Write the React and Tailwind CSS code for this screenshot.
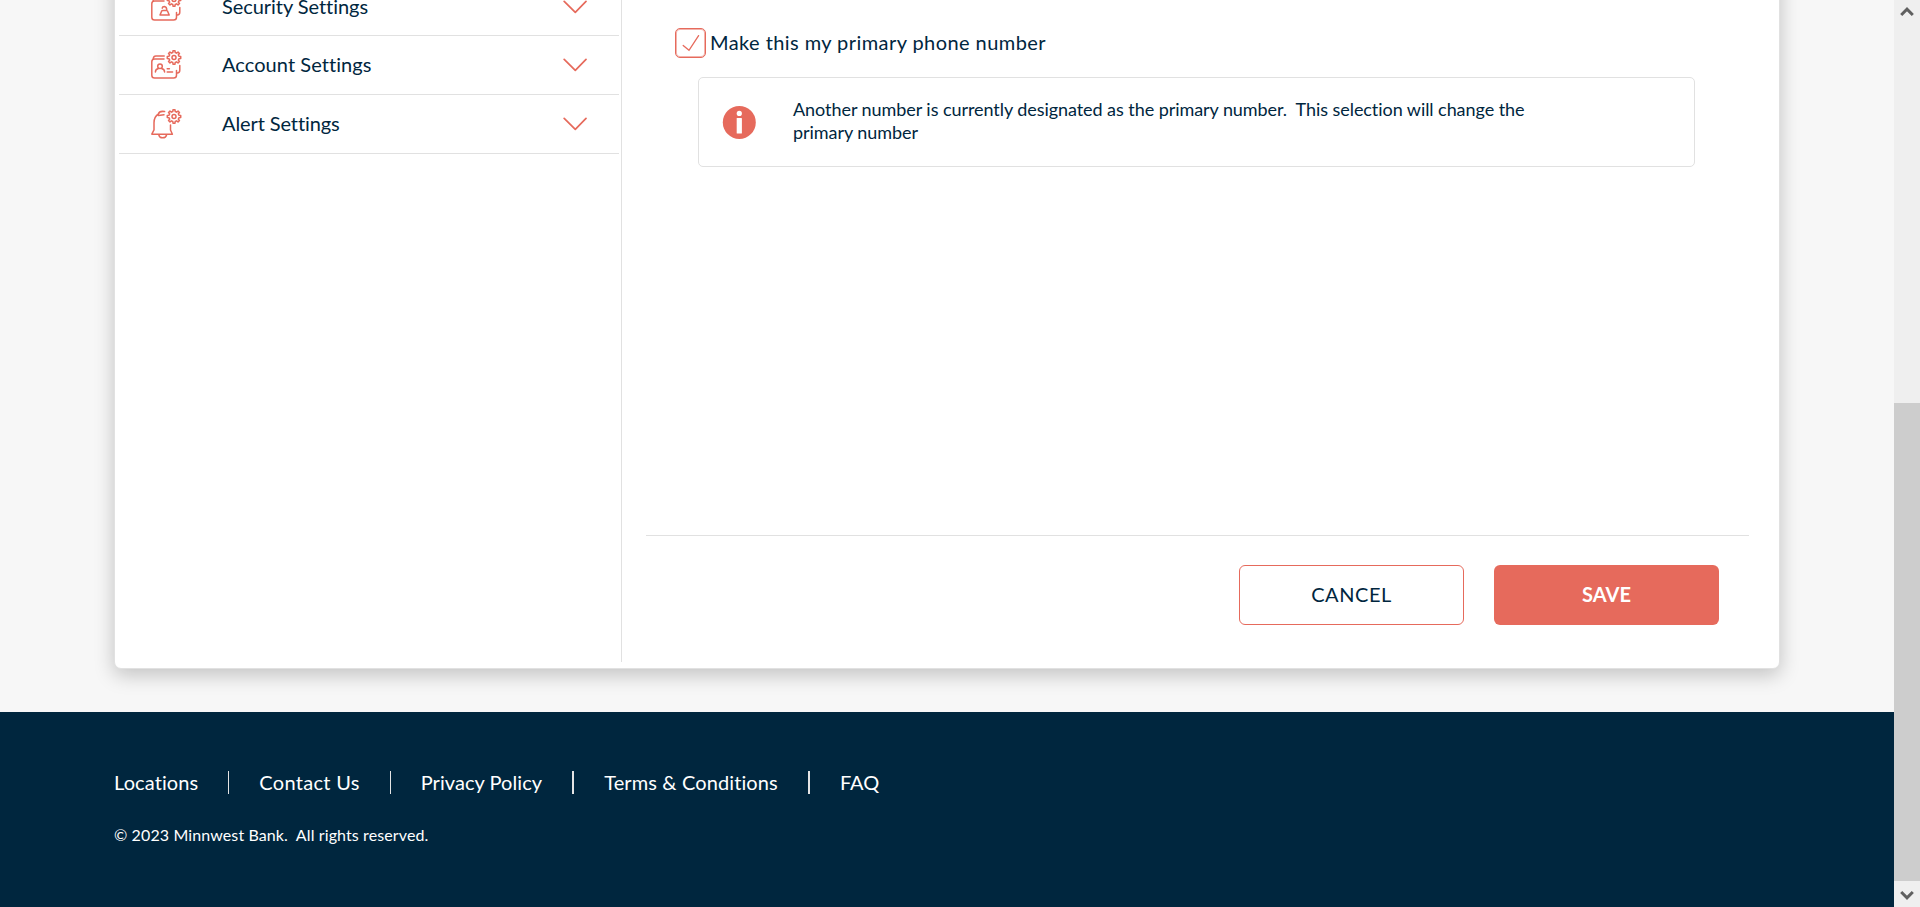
import React from "react";

function gearPath(cx, cy, ro, ri, teeth) {
  const pts = [];
  const step = (Math.PI * 2) / teeth;
  for (let i = 0; i < teeth; i++) {
    const a = i * step - Math.PI / 2;
    [[-0.3, ri], [-0.19, ro], [0.19, ro], [0.3, ri]].forEach(([f, r]) => {
      pts.push(`${(cx + r * Math.cos(a + f * step)).toFixed(2)} ${(cy + r * Math.sin(a + f * step)).toFixed(2)}`);
    });
  }
  return `M${pts.join("L")}Z`;
}

function Gear() {
  return (
    <>
      <path d={gearPath(24, 8.5, 6.8, 5.1, 8)} />
      <circle cx="24" cy="8.5" r="2" />
    </>
  );
}

function FolderFrame() {
  return (
    <>
      <path d="M14 10H4.6Q1.8 10 1.8 12.8V26.2Q1.8 29 4.6 29H23.6Q26.5 29 26.5 26.2V21.5" />
      <path d="M3.2 9.6Q3.6 6.9 5.8 6.9H14.2" />
      <path d="M29.8 16.5V21.3Q29.8 24 27.2 24" />
    </>
  );
}

function Icon({ children }) {
  return (
    <svg viewBox="0 0 32 32" className="h-8 w-8 shrink-0" fill="none" stroke="#e66a5c" strokeWidth="1.5" strokeLinecap="round" strokeLinejoin="round">
      {children}
      <Gear />
    </svg>
  );
}

const icons = {
  security: (
    <Icon>
      <FolderFrame />
      <path d="M10 24L11.6 20.2Q12 19.6 12.8 19.6H16.4Q17.2 19.6 17.6 20.2L19.2 24ZM12.2 17.2Q12.4 15.4 14.4 15.4Q16.8 15.6 16.8 19.4" />
    </Icon>
  ),
  account: (
    <Icon>
      <FolderFrame />
      <circle cx="10" cy="17.2" r="2.3" />
      <path d="M5.4 23Q5.4 19.8 8.6 19.4M11.4 19.4Q14.6 19.8 14.6 23M17.2 19.8H19.4M17.2 23H22.6" />
    </Icon>
  ),
  alert: (
    <Icon>
      <path d="M14.6 3.6Q9.4 2.6 8.4 6Q4 8.8 4 14.8V21.8L1.8 26.2H22.4L20.5 22V17M8.4 7.4L14 6.8M8.8 26.8Q9.4 29.8 12.6 29.8Q16 29.8 16.6 26.8" />
    </Icon>
  ),
};

function MenuRow({ icon, label, height, tracking }) {
  return (
    <div className={`flex items-center border-b border-[#e1e1e1] pl-[31px] pr-[32px] ${height} ${tracking}`}>
      {icons[icon]}
      <span className="ml-10 flex-1 pb-0.5 text-xl leading-6">{label}</span>
      <svg viewBox="0 0 24 14" className="h-3.5 w-6" fill="none" stroke="#e66a5c" strokeWidth="1.7" strokeLinecap="round" strokeLinejoin="round">
        <path d="M1.2 1.4L12.3 12.4L23 1.4" />
      </svg>
    </div>
  );
}

export default function App() {
  return (
    <div className="flex h-[907px] w-full overflow-hidden bg-[#f7f7f7] font-['Lato',sans-serif] text-[#00263e] [font-variant-ligatures:none]">
      <div className="flex flex-1 flex-col">
        <div className="h-[712px] pl-[114px]">
          <main className="-mt-10 flex h-[709px] w-[1666px] rounded-[7px] border border-[#e1e1e1] bg-white pl-1 pb-1.5 shadow-[0_6px_20px_rgba(0,0,0,0.22)]">
            <nav className="w-[502px] shrink-0 pt-[18px] pr-0.5">
              <MenuRow icon="security" label="Security Settings" height="h-[57px]" tracking="tracking-[-0.05px]" />
              <MenuRow icon="account" label="Account Settings" height="h-[59px]" tracking="tracking-[0.06px]" />
              <MenuRow icon="alert" label="Alert Settings" height="h-[59px]" tracking="tracking-[-0.1px]" />
            </nav>
            <section className="flex flex-1 flex-col border-l border-[#e1e1e1] pl-6 pr-[30px] pt-[67px]">
              <label className="flex h-[30px] items-center gap-1 pl-[29px]">
                <span className="flex h-[30px] w-[31px] items-center justify-center rounded-[5px] border border-[#e66a5c] shadow-[inset_0_0_0_1px_rgba(230,106,92,0.5)]">
                  <svg viewBox="0 0 18 18" className="h-[18px] w-[18px]" fill="none" stroke="#e66a5c" strokeWidth="1.3" strokeLinecap="round">
                    <path d="M1.2 11.5L7 16.3L16.6 1.6" />
                  </svg>
                </span>
                <span className="pb-0.5 text-xl leading-6 tracking-[0.43px]">Make this my primary phone number</span>
              </label>
              <div className="mt-[19px] ml-[52px] mr-[54px] flex h-[90px] shrink-0 items-center rounded-[5px] border border-[#e1e1e1] pl-[23px]">
                <svg viewBox="0 0 34 34" className="h-[34px] w-[34px]">
                  <circle cx="17.3" cy="17.4" r="16.5" fill="#e66a5c" />
                  <circle cx="17.3" cy="8.4" r="2.6" fill="#fff" />
                  <rect x="14.7" y="13" width="5.2" height="15.6" rx="0.5" fill="#fff" />
                </svg>
                <p className="ml-[37px] whitespace-pre pb-0.5 text-lg leading-[23px] tracking-[-0.06px]">
                  {"Another number is currently designated as the primary number.  This selection will change the\nprimary number"}
                </p>
              </div>
              <div className="mt-auto flex h-[127px] shrink-0 justify-end gap-[30px] border-t border-[#e1e1e1] pr-[30px] pt-[29px]">
                <button className="h-[60px] w-[225px] rounded-[6px] border border-[#e66a5c] pb-0.5 text-xl tracking-[0.55px]">CANCEL</button>
                <button className="h-[60px] w-[225px] rounded-[6px] bg-[#e66a5c] pb-0.5 text-xl font-bold text-white">SAVE</button>
              </div>
            </section>
          </main>
        </div>
        <footer className="flex-1 bg-[#00263e] pl-[114px] pt-[59px] text-white">
          <nav className="flex gap-[30px] text-xl leading-[22px]">
            <a className="tracking-[0.1px]">Locations</a>
            <span className="h-[23px] w-px bg-[#e4e4e4]" />
            <a className="tracking-[0.3px]">Contact Us</a>
            <span className="h-[23px] w-px bg-[#e4e4e4]" />
            <a className="tracking-[0.06px]">Privacy Policy</a>
            <span className="h-[23px] w-0.5 bg-[#e4e4e4]" />
            <a className="tracking-[0.12px]">{"Terms & Conditions"}</a>
            <span className="h-[23px] w-0.5 bg-[#e4e4e4]" />
            <a>FAQ</a>
          </nav>
          <p className="mt-[29px] whitespace-pre text-base leading-6 tracking-[0.11px]">{"© 2023 Minnwest Bank.  All rights reserved."}</p>
        </footer>
      </div>
      <aside className="flex w-[26px] flex-col items-center bg-[#efefef]">
        <div className="h-[403px] pt-[6px]">
          <svg viewBox="0 0 14 12" className="h-3 w-3.5" fill="none" stroke="#606060" strokeWidth="3">
            <path d="M1.2 9L7 3.2L12.8 9" />
          </svg>
        </div>
        <div className="h-[478px] w-full bg-[#cdcdcd]" />
        <svg viewBox="0 0 14 12" className="mt-2 h-3 w-3.5" fill="none" stroke="#606060" strokeWidth="3">
          <path d="M1.2 3L7 8.8L12.8 3" />
        </svg>
      </aside>
    </div>
  );
}
